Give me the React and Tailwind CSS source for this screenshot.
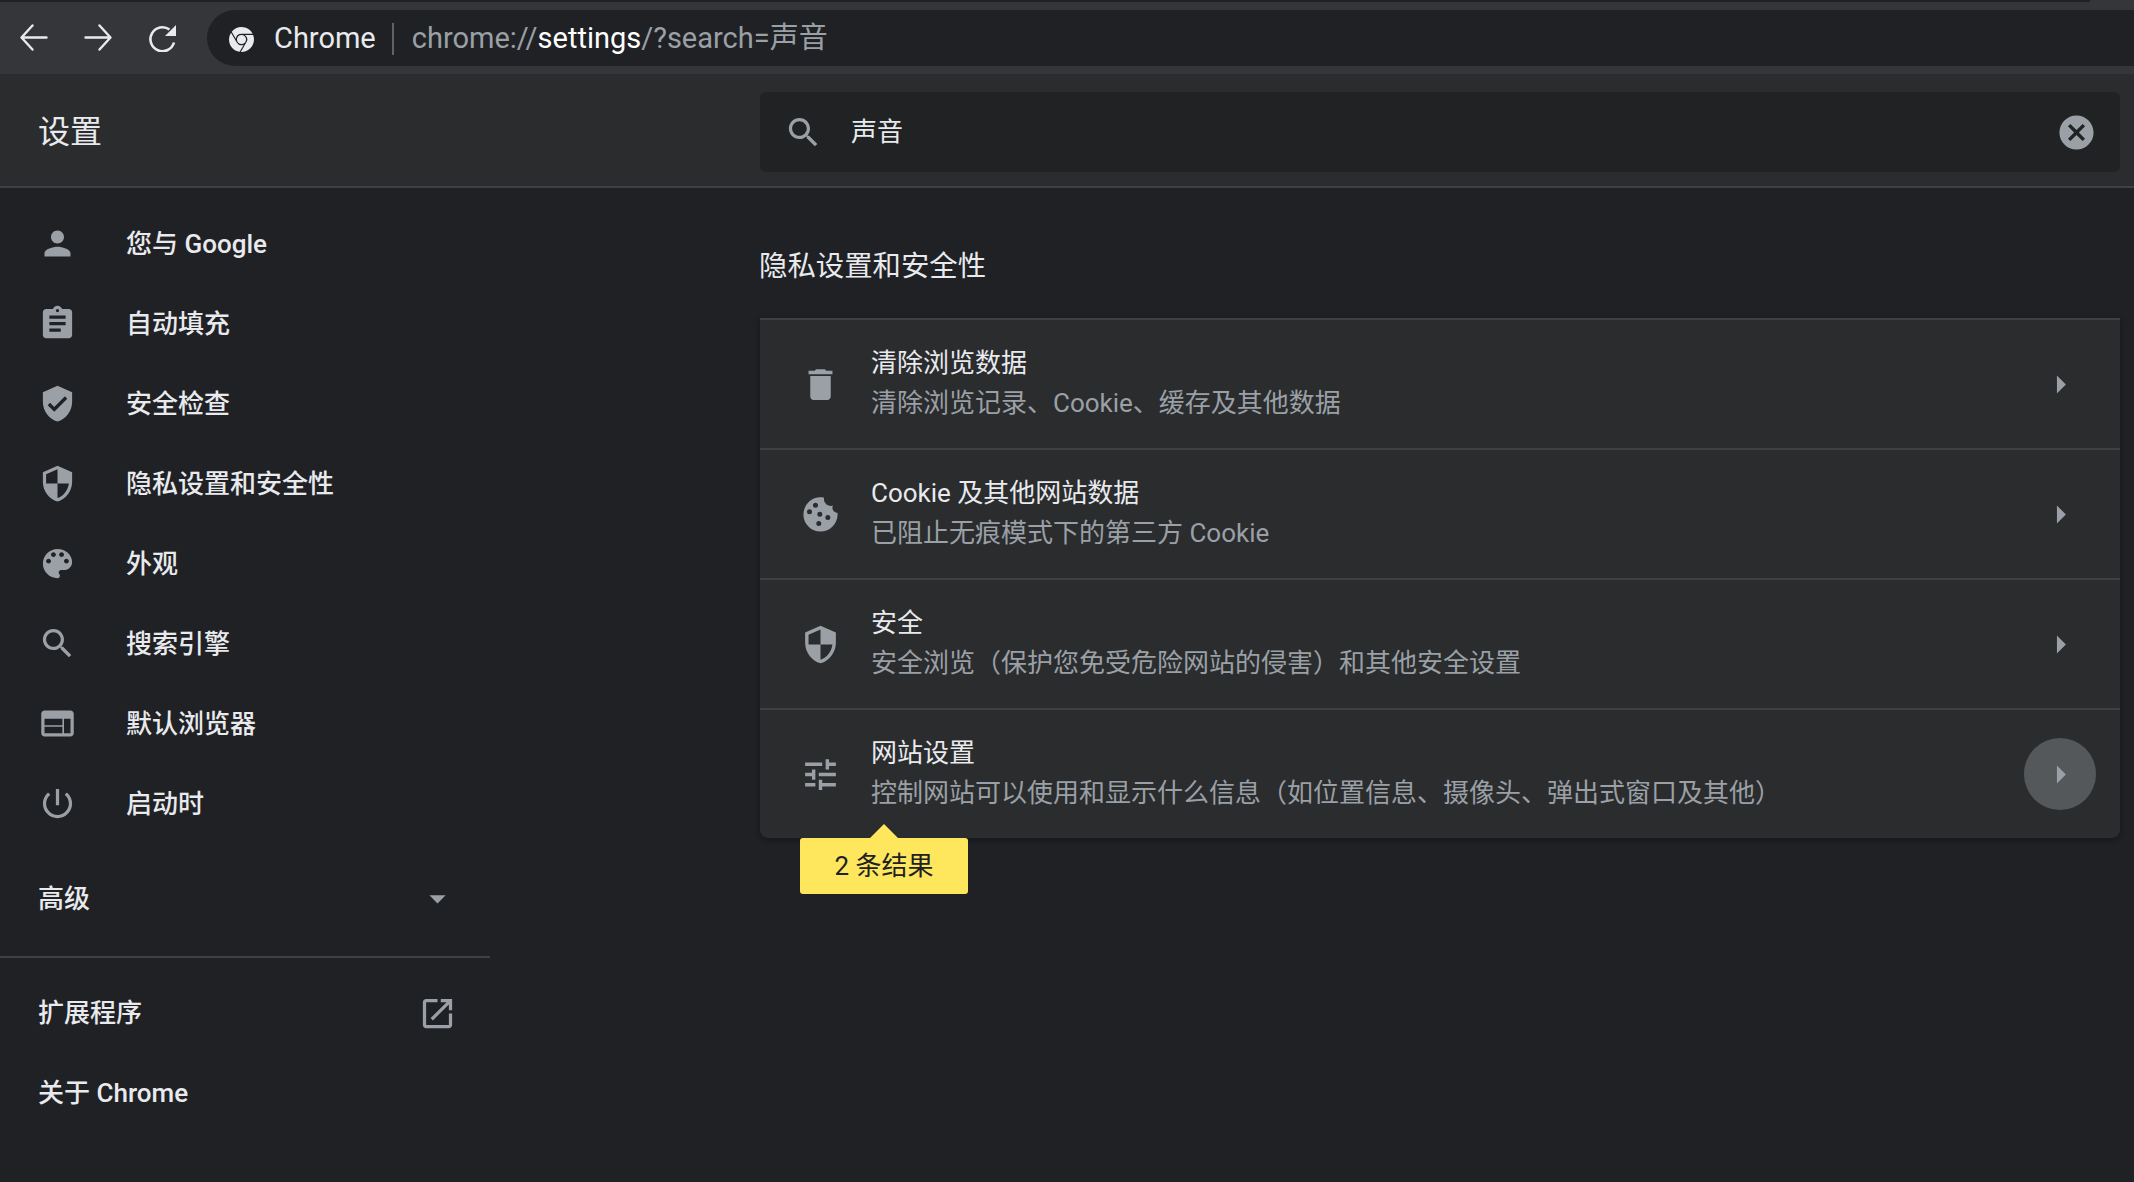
import { SiGooglechrome } from 'react-icons/si';

const ICONS = {
  person: 'M12 12c2.21 0 4-1.79 4-4s-1.79-4-4-4-4 1.79-4 4 1.79 4 4 4zm0 2c-2.67 0-8 1.34-8 4v2h16v-2c0-2.66-5.33-4-8-4z',
  assignment: 'M19 3h-4.18C14.4 1.84 13.3 1 12 1c-1.3 0-2.4.84-2.82 2H5c-1.1 0-2 .9-2 2v14c0 1.1.9 2 2 2h14c1.1 0 2-.9 2-2V5c0-1.1-.9-2-2-2zm-7 0c.55 0 1 .45 1 1s-.45 1-1 1-1-.45-1-1 .45-1 1-1zm2 14H7v-2h7v2zm3-4H7v-2h10v2zm0-4H7V7h10v2z',
  verified: 'M12 1L3 5v6c0 5.55 3.84 10.74 9 12 5.16-1.26 9-6.45 9-12V5l-9-4zm-2 16l-4-4 1.41-1.41L10 14.17l6.59-6.59L18 9l-8 8z',
  security: 'M12 1L3 5v6c0 5.55 3.84 10.74 9 12 5.16-1.26 9-6.45 9-12V5l-9-4zm0 10.99h7c-.53 4.12-3.28 7.79-7 8.94V12H5V6.3l7-3.11v8.8z',
  palette: 'M12 3c-4.97 0-9 4.03-9 9s4.03 9 9 9c.83 0 1.5-.67 1.5-1.5 0-.39-.15-.74-.39-1.01-.23-.26-.38-.61-.38-.99 0-.83.67-1.5 1.5-1.5H16c2.76 0 5-2.24 5-5 0-4.42-4.03-8-9-8zm-5.5 9c-.83 0-1.5-.67-1.5-1.5S5.67 9 6.5 9 8 9.67 8 10.5 7.33 12 6.5 12zm3-4C8.67 8 8 7.33 8 6.5S8.67 5 9.5 5s1.5.67 1.5 1.5S10.33 8 9.5 8zm5 0c-.83 0-1.5-.67-1.5-1.5S13.67 5 14.5 5s1.5.67 1.5 1.5S15.33 8 14.5 8zm3 4c-.83 0-1.5-.67-1.5-1.5S16.67 9 17.5 9s1.5.67 1.5 1.5-.67 1.5-1.5 1.5z',
  search: 'M15.5 14h-.79l-.28-.27C15.41 12.59 16 11.11 16 9.5 16 5.91 13.09 3 9.5 3S3 5.91 3 9.5 5.91 16 9.5 16c1.61 0 3.09-.59 4.23-1.57l.27.28v.79l5 4.99L20.49 19l-4.99-5zm-6 0C7.01 14 5 11.99 5 9.5S7.01 5 9.5 5 14 7.01 14 9.5 11.99 14 9.5 14z',
  web: 'M20 4H4c-1.1 0-1.99.9-1.99 2L2 18c0 1.1.9 2 2 2h16c1.1 0 2-.9 2-2V6c0-1.1-.9-2-2-2zm-5 14H4v-4h11v4zm0-5H4V9h11v4zm5 5h-4V9h4v9z',
  power: 'M13 3h-2v10h2V3zm4.83 2.17l-1.42 1.42C17.99 7.86 19 9.81 19 12c0 3.87-3.13 7-7 7s-7-3.13-7-7c0-2.19 1.01-4.14 2.58-5.42L6.17 5.17C4.23 6.82 3 9.26 3 12c0 4.97 4.03 9 9 9s9-4.03 9-9c0-2.74-1.23-5.18-3.17-6.83z',
  dropDown: 'M7 10l5 5 5-5z',
  openNew: 'M19 19H5V5h7V3H5c-1.11 0-2 .9-2 2v14c0 1.1.89 2 2 2h14c1.1 0 2-.9 2-2v-7h-2v7zM14 3v2h3.59l-9.83 9.83 1.41 1.41L19 6.41V10h2V3h-7z',
  trash: 'M6 19c0 1.1.9 2 2 2h8c1.1 0 2-.9 2-2V7H6v12zM19 4h-3.5l-1-1h-5l-1 1H5v2h14V4z',
  // cookie body plus five holes, wound the other way round
  cookie: 'M21.95 10.99c-1.79-.03-3.7-1.95-2.68-4.22-2.98 1-5.77-1.59-5.19-4.56C6.95.71 2 6.58 2 12c0 5.52 4.48 10 10 10 5.89 0 10.54-5.08 9.95-11.01zM7.6 6.55a1.47 1.47 0 1 1 2.94 0a1.47 1.47 0 1 1-2.94 0zM4.1 10.4a1.47 1.47 0 1 1 2.94 0a1.47 1.47 0 1 1-2.94 0zM10.13 11.8a1.47 1.47 0 1 1 2.94 0a1.47 1.47 0 1 1-2.94 0zM14.83 13.75a1.47 1.47 0 1 1 2.94 0a1.47 1.47 0 1 1-2.94 0zM9.53 17.3a1.47 1.47 0 1 1 2.94 0a1.47 1.47 0 1 1-2.94 0z',
  tune: 'M3 17v2h6v-2H3zM3 5v2h10V5H3zm10 16v-2h8v-2h-8v-2h-2v6h2zM7 9v2H3v2h4v2h2V9H7zm14 4v-2H11v2h10zm-6-4h2V7h4V5h-4V3h-2v6z',
  cancel: 'M12 2C6.47 2 2 6.47 2 12s4.47 10 10 10 10-4.47 10-10S17.53 2 12 2zm5 13.59L15.59 17 12 13.41 8.41 17 7 15.59 10.59 12 7 8.41 8.41 7 12 10.59 15.59 7 17 8.41 13.41 12 17 15.59z',
  arrowRight: 'M10 17l5-5-5-5v10z',
};

function Icon({ name, className = 'w-[39px] h-[39px]' }) {
  return (
    <svg viewBox="0 0 24 24" fill="#9aa0a6" className={`shrink-0 ${className}`}>
      <path d={ICONS[name]} />
    </svg>
  );
}

const menu = [
  ['person', '您与 Google'],
  ['assignment', '自动填充'],
  ['verified', '安全检查'],
  ['security', '隐私设置和安全性'],
  ['palette', '外观'],
  ['search', '搜索引擎'],
  ['web', '默认浏览器'],
  ['power', '启动时'],
];

const rows = [
  ['trash', '清除浏览数据', '清除浏览记录、Cookie、缓存及其他数据'],
  ['cookie', 'Cookie 及其他网站数据', '已阻止无痕模式下的第三方 Cookie'],
  ['security', '安全', '安全浏览（保护您免受危险网站的侵害）和其他安全设置'],
  ['tune', '网站设置', '控制网站可以使用和显示什么信息（如位置信息、摄像头、弹出式窗口及其他）'],
];

function Toolbar() {
  return (
    <div className="h-[74px] bg-[#35363a] flex flex-col">
      <div className="h-[2px] w-[2090px] bg-[#202124]" />
      <div className="flex-1 flex items-center">
        <div className="flex items-center w-[207px] shrink-0 pl-[20px] gap-[36px]">
          <svg viewBox="0 0 28 28" fill="none" stroke="#e8eaed" strokeWidth="2.4" strokeLinecap="round" strokeLinejoin="round" className="w-[28px] h-[28px]">
            <path d="M26.5 13.5H2M12.5 1.5L1.5 13.5l11 12" />
          </svg>
          <svg viewBox="0 0 28 28" fill="none" stroke="#e8eaed" strokeWidth="2.4" strokeLinecap="round" strokeLinejoin="round" className="w-[28px] h-[28px]">
            <path d="M1.5 13.5H26M15.5 1.5l11 12-11 12" />
          </svg>
          <svg viewBox="0 0 28 28" fill="none" className="w-[28px] h-[28px]">
            <path d="M26 18.5A12 12 0 1 1 21.5 5.5" stroke="#e8eaed" strokeWidth="2.6" />
            <path d="M28 1v11H17z" fill="#e8eaed" />
          </svg>
        </div>
        <div className="flex-1 h-[56px] pt-[2px] bg-[#202124] rounded-l-[28px] flex items-center pl-[22px] text-[29px] whitespace-nowrap">
          <SiGooglechrome className="w-[25px] h-[25px] text-[#e8eaed] shrink-0" />
          <span className="ml-[20px] text-[#e8eaed]">Chrome</span>
          <span className="ml-[16px] mr-[18px] w-[2px] h-[32px] bg-[#5f6368]" />
          <span className="text-[#9aa0a6]">chrome://</span>
          <span className="text-[#ffffff]">settings</span>
          <span className="text-[#9aa0a6]">/?search=声音</span>
        </div>
      </div>
    </div>
  );
}

function Header() {
  return (
    <div className="h-[114px] pt-[4px] bg-[#2b2c2e] border-b-2 border-[#3f4043] flex items-center">
      <div className="w-[760px] shrink-0 pl-[38px] text-[32px] text-[#e8eaed]">设置</div>
      <div className="w-[1360px] h-[80px] bg-[#212224] rounded-[6px] flex items-center pl-[24px] pr-[23px]">
        <Icon name="search" className="w-[39px] h-[39px]" />
        <span className="ml-[28px] text-[26px] text-[#e8eaed] flex-1">声音</span>
        <Icon name="cancel" className="w-[41px] h-[41px]" />
      </div>
    </div>
  );
}

function Sidebar() {
  return (
    <div className="w-[490px] shrink-0 pt-[15px] font-medium text-[26px] text-[#e8eaed]">
      {menu.map(([icon, label]) => (
        <div key={label} className="h-[80px] flex items-center pl-[38px]">
          <Icon name={icon} />
          <span className="ml-[49px] pt-[2px]">{label}</span>
        </div>
      ))}
      <div className="mt-[15px] h-[80px] flex items-center justify-between pl-[38px] pr-[33px]">
        <span className="pt-[2px]">高级</span>
        <Icon name="dropDown" />
      </div>
      <div className="mt-[18px] h-[2px] bg-[#3f4043]" />
      <div className="mt-[15px] h-[80px] flex items-center justify-between pl-[38px] pr-[33px]">
        <span>扩展程序</span>
        <Icon name="openNew" />
      </div>
      <div className="h-[80px] flex items-center pl-[38px]">关于 Chrome</div>
    </div>
  );
}

function Content() {
  return (
    <div className="flex-1 pl-[270px] pr-[14px]">
      <h2 className="mt-[62px] -ml-[1px] h-[34px] leading-[34px] text-[28.4px] text-[#e8eaed]">隐私设置和安全性</h2>
      <div className="relative mt-[34px] bg-[#2b2c2e] border-t-2 border-[#3f4043] rounded-b-[8px] shadow-[0_2px_6px_rgba(0,0,0,0.35)]">
        {rows.map(([icon, title, sub], i) => (
          <div key={title} className={`flex items-center pl-[40px] pr-[24px] ${i > 0 ? 'h-[130px] border-t-2 border-[#3f4043]' : 'h-[128px]'}`}>
            <Icon name={icon} className="w-[41px] h-[41px]" />
            <div className="ml-[30px] pb-[2px] flex-1 flex flex-col gap-[8px] text-[26px] leading-[32px]">
              <span className="text-[#e8eaed]">{title}</span>
              <span className="text-[#9aa0a6]">{sub}</span>
            </div>
            <div className={`w-[72px] h-[72px] rounded-full flex items-center justify-center ${i === 3 ? 'bg-[#55585b]' : ''}`}>
              <Icon name="arrowRight" className="w-[43px] h-[43px]" />
            </div>
          </div>
        ))}
        <div className="absolute left-[40px] top-full flex flex-col items-center w-[168px]">
          <div className="-mt-[14px] w-0 h-0 border-x-[14px] border-b-[14px] border-x-transparent border-b-[#fee75c]" />
          <div className="w-[168px] h-[56px] bg-[#fee75c] rounded-[3px] flex items-center justify-center text-[26px] text-[#202124]">
            2 条结果
          </div>
        </div>
      </div>
    </div>
  );
}

export default function App() {
  return (
    <div className="w-[2134px] h-[1182px] overflow-hidden bg-[#202125] font-['Roboto','Noto_Sans_CJK_SC',sans-serif]">
      <Toolbar />
      <Header />
      <div className="flex">
        <Sidebar />
        <Content />
      </div>
    </div>
  );
}
